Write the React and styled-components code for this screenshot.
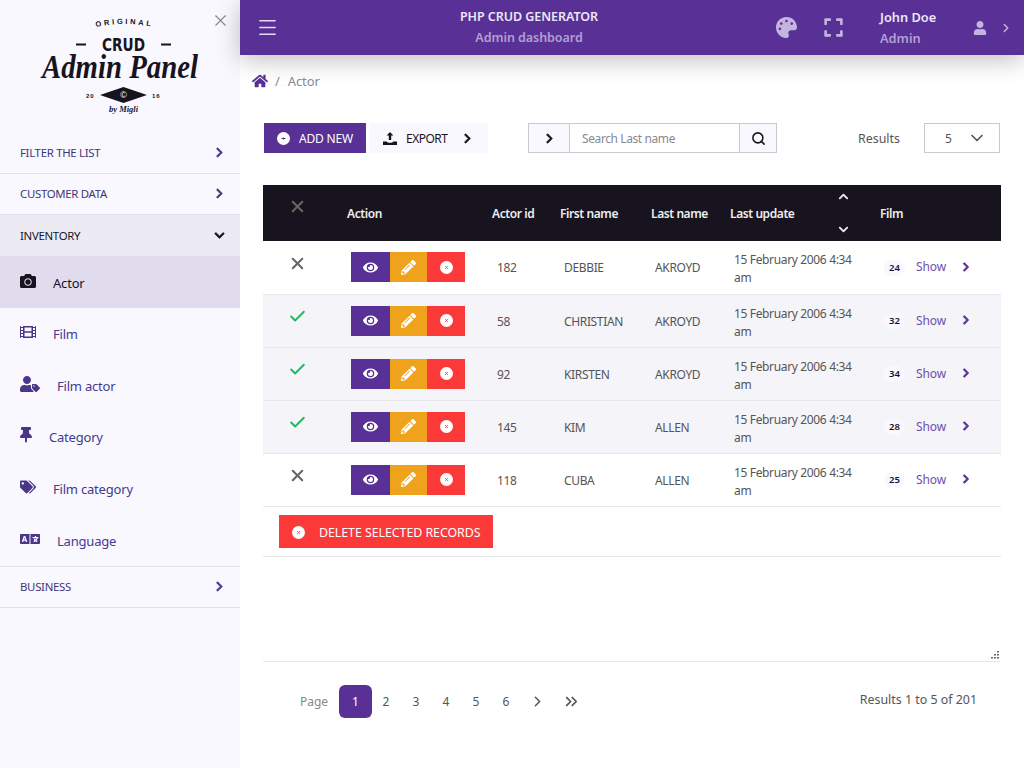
import React from "react";
import styled, { createGlobalStyle } from "styled-components";
import {
  FaCamera,
  FaChevronDown,
  FaChevronRight,
  FaChevronUp,
  FaExpand,
  FaEye,
  FaFilm,
  FaHome,
  FaLanguage,
  FaPalette,
  FaPencilAlt,
  FaTags,
  FaThumbtack,
  FaUser,
  FaUserTag,
} from "react-icons/fa";
import { Check, ChevronDown, ChevronRight, ChevronsRight, Menu, Search, X } from "lucide-react";

const Global = createGlobalStyle`
  html, body { margin: 0; padding: 0; background: #fff; }
  body {
    font-family: "Noto Sans", "Open Sans", sans-serif;
    font-size: 13px;
    color: #444;
    overflow: hidden;
  }
  * { box-sizing: border-box; }
`;

const Page = styled.div`
  display: flex;
  width: 1024px;
  height: 768px;
  overflow: hidden;
`;

const Sidebar = styled.aside`
  width: 240px;
  flex: none;
  background: #f9f8fe;
  position: relative;
`;

const CloseBtn = styled.div`
  position: absolute;
  top: 11px;
  left: 211px;
  color: #888;
  display: flex;
`;

const LogoBox = styled.div`
  height: 132px;
  display: flex;
  justify-content: center;
  padding-top: 18px;
`;

const Section = styled.div`
  height: ${(p) => (p.$first ? "42px" : "41px")};
  display: flex;
  align-items: center;
  justify-content: space-between;
  padding: 0 15px 1px 20px;
  font-size: 11.4px;
  letter-spacing: -0.3px;
  color: ${(p) => (p.$open ? "#17141f" : "#3f3578")};
  background: ${(p) => (p.$open ? "#ecebf4" : "transparent")};
  border-bottom: ${(p) => (p.$open ? "none" : "1px solid #e2e0ec")};
  svg {
    width: 11px;
    height: 11px;
    stroke: currentColor;
    stroke-width: 30;
    color: ${(p) => (p.$open ? "#17141f" : "#483a86")};
  }
`;

const Item = styled.div`
  height: ${(p) => (p.$active ? "52px" : "51.6px")};
  display: flex;
  align-items: center;
  padding: 1px 0 0 20px;
  font-size: 13px;
  letter-spacing: -0.2px;
  color: ${(p) => (p.$active ? "#17141f" : "#433a92")};
  background: ${(p) => (p.$active ? "#e0dced" : "transparent")};
  svg {
    flex: none;
    width: ${(p) => p.$iconW}px;
    height: 16px;
    margin-right: 17px;
    margin-top: -4px;
    color: ${(p) => (p.$active ? "#17141f" : "#4b3588")};
  }
`;

const Divider = styled.div`
  border-top: 1px solid #e2e0ec;
`;

const Main = styled.main`
  flex: 1;
  min-width: 0;
  display: flex;
  flex-direction: column;
`;

const TopBar = styled.header`
  height: 55px;
  flex: none;
  display: flex;
  align-items: center;
  background: #593196;
  box-shadow: 0 5px 25px rgba(0, 0, 0, 0.25);
  padding-left: 16px;
  color: #c9b9e2;
  position: relative;
`;

const Hamburger = styled.div`
  display: flex;
  width: 23px;
  color: #e4dcf0;
`;

const Brand = styled.div`
  width: 496px;
  padding-left: 4px;
  text-align: center;
  font-weight: 600;
  font-size: 12.5px;
  letter-spacing: -0.05px;
`;

const BarTitle = styled.div`
  color: #ece6f5;
  line-height: 20px;
`;

const BarSub = styled.div`
  color: #b49fd3;
  line-height: 20px;
  padding-top: 1px;
`;

const BarIcon = styled.div`
  display: flex;
  color: #c5b3e0;
  margin-left: ${(p) => p.$ml}px;
`;

const UserBox = styled.div`
  margin-left: 36px;
  width: 93px;
  font-weight: 600;
  font-size: 12.8px;
`;

const Crumbs = styled.nav`
  display: flex;
  align-items: center;
  gap: 8px;
  height: 52px;
  padding-left: 12px;
  color: #8a8a99;
  letter-spacing: -0.1px;
  svg { color: #593196; margin-right: -1px; }
`;

const Content = styled.div`
  padding: 16px 24px 0 23px;
  flex: 1;
`;

const Toolbar = styled.div`
  display: flex;
  align-items: center;
  height: 30px;
  padding-left: 1px;
`;

const Btn = styled.div`
  height: 30px;
  display: flex;
  align-items: center;
  font-size: 12px;
  white-space: nowrap;
  background: ${(p) => p.$bg};
  color: ${(p) => p.$fg};
`;

const AddBtn = styled(Btn)`
  width: 102px;
  padding-left: 13px;
  gap: 9px;
  letter-spacing: -0.2px;
`;

const ExportBtn = styled(Btn)`
  width: 118px;
  margin-left: 4px;
  padding-left: 13px;
  gap: 9px;
  letter-spacing: -0.5px;
`;

const ExportChevron = styled.span`
  display: flex;
  margin-left: 6px;
  svg { width: 11px; height: 11px; stroke: currentColor; stroke-width: 30; }
`;

const SearchGroup = styled.div`
  display: flex;
  height: 30px;
  width: 249px;
  margin-left: 40px;
  border: 1px solid #cbc8d0;
`;

const GroupBtn = styled.div`
  width: ${(p) => p.$w}px;
  flex: none;
  background: #f9f8fe;
  color: #17141f;
  display: flex;
  align-items: center;
  justify-content: center;
  border-${(p) => p.$side}: 1px solid #cbc8d0;
  svg.small { width: 11px; height: 11px; stroke: currentColor; stroke-width: 30; }
`;

const SearchInput = styled.div`
  flex: 1;
  display: flex;
  align-items: center;
  padding-left: 12px;
  font-size: 12px;
  letter-spacing: -0.4px;
  color: #8a8a92;
`;

const ResultsLabel = styled.div`
  margin-left: 81px;
  width: 66px;
  font-size: 12.4px;
  color: #555;
`;

const Select = styled.div`
  width: 76px;
  height: 30px;
  border: 1px solid #cbc8d0;
  display: flex;
  align-items: center;
  justify-content: space-between;
  padding: 0 12px 0 20px;
  font-size: 12px;
  color: #555;
`;

const TableWrap = styled.div`
  margin-top: 32px;
  height: 477px;
  border-bottom: 1px solid #e8e8ec;
  position: relative;
`;

const Grip = styled.svg`
  position: absolute;
  right: 1px;
  bottom: 1px;
  width: 9px;
  height: 9px;
  color: #666;
`;

const Table = styled.table`
  width: 738px;
  border-collapse: collapse;
  table-layout: fixed;
`;

const Th = styled.th`
  height: 56px;
  background: #17141f;
  color: #eee;
  font-size: 12px;
  font-weight: 600;
  letter-spacing: -0.42px;
  text-align: left;
  padding: 0;
`;

const ThClear = styled.div`
  padding-left: 25px;
  margin-top: -14px;
  color: #666;
  display: flex;
`;

const SortHead = styled.div`
  display: flex;
  align-items: center;
  justify-content: space-between;
  height: 56px;
  padding-right: 31px;
`;

const SortArrows = styled.div`
  display: flex;
  flex-direction: column;
  justify-content: space-between;
  height: 44px;
  color: #eee;
  svg { width: 11px; height: 11px; display: block; }
`;

const Tr = styled.tr`
  background: ${(p) => (p.$selected ? "#f5f4f9" : "#fff")};
  border-bottom: 1px solid #e8e8ec;
`;

const Td = styled.td`
  height: 53px;
  padding: 0 0 0 4px;
`;

const TextTd = styled(Td)`
  padding: ${(p) => p.$pt || 2}px ${(p) => p.$pr || 0}px 0 ${(p) => p.$pl || 4}px;
  font-size: 12px;
  letter-spacing: -0.35px;
  color: #555;
  line-height: 18px;
`;

const Mark = styled.div`
  display: flex;
  padding-left: 21px;
  margin-top: -8px;
  color: ${(p) => (p.$on ? "#1fb95d" : "#666")};
`;

const Actions = styled.div`
  display: flex;
`;

const ActionBtn = styled.div`
  width: ${(p) => p.$w}px;
  height: 30px;
  display: flex;
  align-items: center;
  justify-content: center;
  background: ${(p) => p.$bg};
  color: #fff;
`;

const FilmCell = styled.div`
  display: flex;
  align-items: center;
  margin-top: -1px;
`;

const Badge = styled.span`
  width: 21px;
  height: 16px;
  border-radius: 8px;
  background: #f9f8fe;
  color: #17141f;
  font-size: 9.5px;
  font-weight: 600;
  text-align: center;
  line-height: 16px;
  letter-spacing: 0;
  margin-top: 2px;
`;

const ShowLink = styled.span`
  margin-left: 11px;
  width: 45px;
  font-size: 12px;
  letter-spacing: -0.1px;
  color: #6f4ea8;
`;

const ShowChevron = styled.span`
  display: flex;
  color: #593196;
  svg { width: 10px; height: 10px; stroke: currentColor; stroke-width: 40; }
`;

const DeleteBtn = styled(Btn)`
  width: 214px;
  height: 33px;
  font-size: 12.4px;
  letter-spacing: -0.05px;
  padding: 2px 0 0 13px;
  gap: 14px;
`;

const DeleteCell = styled.td`
  height: 50px;
  padding: 0 0 0 16px;
`;

const Footer = styled.div`
  display: flex;
  align-items: center;
  justify-content: space-between;
  padding: 23px 23px 0 37px;
`;

const Pager = styled.div`
  display: flex;
  align-items: center;
  font-size: 12px;
  color: #555;
`;

const PageLabel = styled.span`
  color: #888;
  width: 39px;
`;

const PageNum = styled.div`
  width: ${(p) => (p.$active ? "33px" : "30px")};
  margin-right: ${(p) => (p.$active ? "-1px" : "0")};
  height: 33px;
  display: flex;
  align-items: center;
  justify-content: center;
  border-radius: ${(p) => (p.$active ? "6px" : "0")};
  background: ${(p) => (p.$active ? "#593196" : "transparent")};
  color: ${(p) => (p.$active ? "#fff" : "#555")};
`;

const PageArrow = styled(PageNum)`
  margin-left: ${(p) => p.$ml}px;
`;

const Totals = styled.div`
  font-size: 12.4px;
  color: #555;
  margin-top: -5px;
`;

const rows = [
  { id: 182, first: "DEBBIE", last: "AKROYD", films: 24, on: false },
  { id: 58, first: "CHRISTIAN", last: "AKROYD", films: 32, on: true },
  { id: 92, first: "KIRSTEN", last: "AKROYD", films: 34, on: true },
  { id: 145, first: "KIM", last: "ALLEN", films: 28, on: true },
  { id: 118, first: "CUBA", last: "ALLEN", films: 25, on: false },
];

const menu = [
  { label: "Actor", Icon: FaCamera, w: 16, active: true },
  { label: "Film", Icon: FaFilm, w: 16 },
  { label: "Film actor", Icon: FaUserTag, w: 20 },
  { label: "Category", Icon: FaThumbtack, w: 12 },
  { label: "Film category", Icon: FaTags, w: 16 },
  { label: "Language", Icon: FaLanguage, w: 20 },
];

function Logo() {
  return (
    <svg width="200" height="100" viewBox="-20 0 200 100">
      <defs>
        <path id="logo-arc" d="M 56 9 Q 83 3 114 9" fill="none" />
      </defs>
      <text fontFamily="Liberation Sans" fontWeight="700" fontSize="7.5" letterSpacing="2.6" fill="#17141f">
        <textPath href="#logo-arc">ORIGINAL</textPath>
      </text>
      <rect x="36" y="25.5" width="10" height="2" fill="#17141f" />
      <rect x="121" y="25.5" width="10" height="2" fill="#17141f" />
      <text x="62" y="33" fontFamily="DejaVu Sans" fontWeight="700" fontSize="18" textLength="43" lengthAdjust="spacingAndGlyphs" fill="#17141f">
        CRUD
      </text>
      <text x="2" y="60" fontFamily="Liberation Serif" fontStyle="italic" fontWeight="700" fontSize="33" textLength="156" lengthAdjust="spacingAndGlyphs" fill="#17141f">
        Admin Panel
      </text>
      <polygon points="60,77 83.5,69 107,77 83.5,85" fill="#17141f" />
      <text x="83.5" y="80" textAnchor="middle" fontFamily="Liberation Sans" fontSize="9" fill="#fff">©</text>
      <text x="46" y="80" fontFamily="Liberation Sans" fontWeight="700" fontSize="6" letterSpacing="1" fill="#17141f">20</text>
      <text x="112" y="80" fontFamily="Liberation Sans" fontWeight="700" fontSize="6" letterSpacing="1" fill="#17141f">16</text>
      <text x="69" y="94" fontFamily="Liberation Serif" fontStyle="italic" fontWeight="700" fontSize="8.5" fill="#17141f">by Migli</text>
    </svg>
  );
}

function CircleX({ size = 13, color = "#fc3939" }) {
  return (
    <svg width={size} height={size} viewBox="0 0 14 14">
      <circle cx="7" cy="7" r="7" fill="#fff" />
      <path d="M5.6 5.6l2.8 2.8M8.4 5.6l-2.8 2.8" stroke={color} strokeWidth="1" />
    </svg>
  );
}

function CirclePlus() {
  return (
    <svg width="13" height="13" viewBox="0 0 14 14">
      <circle cx="7" cy="7" r="7" fill="#fff" />
      <path d="M4.8 7h4.4M7 5.8v2.4" stroke="#593196" strokeWidth="1.1" />
    </svg>
  );
}

function UploadIcon() {
  return (
    <svg width="14" height="13" viewBox="0 0 14 13" fill="#17141f">
      <path d="M7 0l3.4 3.6H8.2V8H5.8V3.6H3.6z" />
      <path d="M0 9.5h3.6c.4 1 1.8 1.2 3.4 1.2s3-.2 3.4-1.2H14V13H0z" />
    </svg>
  );
}

export default function App() {
  return (
    <Page>
      <Global />
      <Sidebar>
        <CloseBtn>
          <X size={19} strokeWidth={1.4} />
        </CloseBtn>
        <LogoBox>
          <Logo />
        </LogoBox>
        <Section $first>
          FILTER THE LIST <FaChevronRight />
        </Section>
        <Section>
          CUSTOMER DATA <FaChevronRight />
        </Section>
        <Section $open>
          INVENTORY <FaChevronDown />
        </Section>
        {menu.map(({ label, Icon, active, w }) => (
          <Item key={label} $active={active} $iconW={w}>
            <Icon />
            {label}
          </Item>
        ))}
        <Divider />
        <Section>
          BUSINESS <FaChevronRight />
        </Section>
      </Sidebar>
      <Main>
        <TopBar>
          <Hamburger>
            <Menu size={23} strokeWidth={1.5} />
          </Hamburger>
          <Brand>
            <BarTitle>PHP CRUD GENERATOR</BarTitle>
            <BarSub>Admin dashboard</BarSub>
          </Brand>
          <BarIcon $ml={1}>
            <FaPalette size={21} />
          </BarIcon>
          <BarIcon $ml={26}>
            <FaExpand size={21} />
          </BarIcon>
          <UserBox>
            <BarTitle>John Doe</BarTitle>
            <BarSub>Admin</BarSub>
          </UserBox>
          <BarIcon $ml={0}>
            <FaUser size={14} />
          </BarIcon>
          <BarIcon $ml={12}>
            <ChevronRight size={14} strokeWidth={2.5} />
          </BarIcon>
        </TopBar>
        <Crumbs>
          <FaHome size={16} />
          <span>/</span>
          <span>Actor</span>
        </Crumbs>
        <Content>
          <Toolbar>
            <AddBtn $bg="#593196" $fg="#fff">
              <CirclePlus />
              ADD NEW
            </AddBtn>
            <ExportBtn $bg="#f9f8fe" $fg="#17141f">
              <UploadIcon />
              EXPORT
              <ExportChevron>
                <FaChevronRight />
              </ExportChevron>
            </ExportBtn>
            <SearchGroup>
              <GroupBtn $w={41} $side="right">
                <FaChevronRight className="small" />
              </GroupBtn>
              <SearchInput>Search Last name</SearchInput>
              <GroupBtn $w={37} $side="left">
                <Search size={15} strokeWidth={2.5} />
              </GroupBtn>
            </SearchGroup>
            <ResultsLabel>Results</ResultsLabel>
            <Select>
              5 <ChevronDown size={20} strokeWidth={2} />
            </Select>
          </Toolbar>
          <TableWrap>
            <Table>
              <colgroup>
                <col width="84" />
                <col width="145" />
                <col width="68" />
                <col width="91" />
                <col width="79" />
                <col width="150" />
                <col width="121" />
              </colgroup>
              <thead>
                <tr>
                  <Th>
                    <ThClear>
                      <X size={19} strokeWidth={2.6} />
                    </ThClear>
                  </Th>
                  <Th>Action</Th>
                  <Th>Actor id</Th>
                  <Th>First name</Th>
                  <Th>Last name</Th>
                  <Th>
                    <SortHead>
                      Last update
                      <SortArrows>
                        <FaChevronUp />
                        <FaChevronDown />
                      </SortArrows>
                    </SortHead>
                  </Th>
                  <Th>Film</Th>
                </tr>
              </thead>
              <tbody>
                {rows.map((r) => (
                  <Tr key={r.id} $selected={r.on}>
                    <Td>
                      <Mark $on={r.on}>
                        {r.on ? <Check size={19} strokeWidth={2.4} /> : <X size={19} strokeWidth={2.6} />}
                      </Mark>
                    </Td>
                    <Td>
                      <Actions>
                        <ActionBtn $w={39} $bg="#593196">
                          <FaEye size={15} />
                        </ActionBtn>
                        <ActionBtn $w={37} $bg="#efa31d">
                          <FaPencilAlt size={15} />
                        </ActionBtn>
                        <ActionBtn $w={38} $bg="#fc3939">
                          <CircleX />
                        </ActionBtn>
                      </Actions>
                    </Td>
                    <TextTd $pl={5}>{r.id}</TextTd>
                    <TextTd>{r.first}</TextTd>
                    <TextTd>{r.last}</TextTd>
                    <TextTd $pr={22} $pt={4}>15 February 2006 4:34 am</TextTd>
                    <Td>
                      <FilmCell>
                        <Badge>{r.films}</Badge>
                        <ShowLink>Show</ShowLink>
                        <ShowChevron>
                          <FaChevronRight />
                        </ShowChevron>
                      </FilmCell>
                    </Td>
                  </Tr>
                ))}
                <Tr>
                  <DeleteCell colSpan={7}>
                    <DeleteBtn $bg="#fc3939" $fg="#fff">
                      <CircleX />
                      DELETE SELECTED RECORDS
                    </DeleteBtn>
                  </DeleteCell>
                </Tr>
              </tbody>
            </Table>
            <Grip viewBox="0 0 9 9" fill="currentColor">
              <rect x="7" y="0" width="2" height="1.5" />
              <rect x="4" y="3" width="2" height="1.5" />
              <rect x="7" y="3" width="2" height="1.5" />
              <rect x="1" y="6" width="2" height="1.5" />
              <rect x="4" y="6" width="2" height="1.5" />
              <rect x="7" y="6" width="2" height="1.5" />
            </Grip>
          </TableWrap>
          <Footer>
            <Pager>
              <PageLabel>Page</PageLabel>
              <PageNum $active>1</PageNum>
              {[2, 3, 4, 5, 6].map((n) => (
                <PageNum key={n}>{n}</PageNum>
              ))}
              <PageArrow $ml={1}>
                <ChevronRight size={17} strokeWidth={2.2} />
              </PageArrow>
              <PageArrow $ml={4}>
                <ChevronsRight size={19} strokeWidth={2.2} />
              </PageArrow>
            </Pager>
            <Totals>Results 1 to 5 of 201</Totals>
          </Footer>
        </Content>
      </Main>
    </Page>
  );
}
